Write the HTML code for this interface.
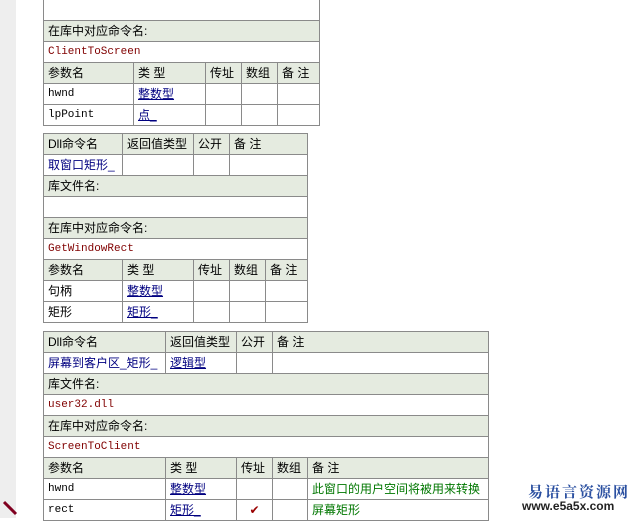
<!DOCTYPE html><html><head><meta charset="utf-8"><style>
body{margin:0;width:643px;height:518px;overflow:hidden;background:#fff;position:relative;font-family:"Liberation Sans","Noto Sans CJK SC","WenQuanYi Zen Hei",sans-serif;font-size:12px;color:#000}
.strip{position:absolute;left:0;top:0;width:16px;height:518px;background:#eeeeee}
table{position:absolute;border-collapse:collapse;table-layout:fixed}
td{border:1px solid #8a8a8a;height:20px;padding:0 0 0 4px;white-space:nowrap;overflow:hidden;line-height:20px}
.h td,td.h{background:#e5ebe0}
.b{color:#000080;text-decoration:underline}
.m{font-family:"Liberation Mono",monospace;font-size:11px;color:#800000}
.mb{font-family:"Liberation Mono",monospace;font-size:11px}
.g{color:#007700}
.logo{position:absolute;left:528px;top:481px;color:#2a4fa0;font-size:15px;font-weight:bold;letter-spacing:2px;font-family:"Noto Serif CJK SC",serif}
.url{position:absolute;left:522px;top:499px;font-size:12px;color:#222;font-weight:bold}
</style></head><body>
<div class="strip"></div>
<table style="left:43px;top:-1px;width:276px">
<col style="width:90px"><col style="width:72px"><col style="width:36px"><col style="width:36px"><col style="width:42px">
<tr><td colspan="5"></td></tr>
<tr class="h"><td colspan="5">在库中对应命令名:</td></tr>
<tr><td colspan="5" class="m">ClientToScreen</td></tr>
<tr class="h"><td>参数名</td><td>类 型</td><td>传址</td><td>数组</td><td>备 注</td></tr>
<tr><td class="mb">hwnd</td><td><span class="b">整数型</span></td><td></td><td></td><td></td></tr>
<tr><td class="mb">lpPoint</td><td><span class="b">点_</span></td><td></td><td></td><td></td></tr>
</table>
<table style="left:43px;top:133px;width:264px">
<col style="width:79px"><col style="width:71px"><col style="width:36px"><col style="width:36px"><col style="width:42px">
<tr class="h"><td>Dll命令名</td><td>返回值类型</td><td>公开</td><td colspan="2">备 注</td></tr>
<tr><td><span class="b" style="text-decoration:none">取窗口矩形_</span></td><td></td><td></td><td colspan="2"></td></tr>
<tr class="h"><td colspan="5">库文件名:</td></tr>
<tr><td colspan="5"></td></tr>
<tr class="h"><td colspan="5">在库中对应命令名:</td></tr>
<tr><td colspan="5" class="m">GetWindowRect</td></tr>
<tr class="h"><td>参数名</td><td>类 型</td><td>传址</td><td>数组</td><td>备 注</td></tr>
<tr><td>句柄</td><td><span class="b">整数型</span></td><td></td><td></td><td></td></tr>
<tr><td>矩形</td><td><span class="b">矩形_</span></td><td></td><td></td><td></td></tr>
</table>
<table style="left:43px;top:331px;width:445px">
<col style="width:122px"><col style="width:71px"><col style="width:36px"><col style="width:35px"><col style="width:181px">
<tr class="h"><td>Dll命令名</td><td>返回值类型</td><td>公开</td><td colspan="2">备 注</td></tr>
<tr><td><span class="b" style="text-decoration:none">屏幕到客户区_矩形_</span></td><td><span class="b">逻辑型</span></td><td></td><td colspan="2"></td></tr>
<tr class="h"><td colspan="5">库文件名:</td></tr>
<tr><td colspan="5" class="m">user32.dll</td></tr>
<tr class="h"><td colspan="5">在库中对应命令名:</td></tr>
<tr><td colspan="5" class="m">ScreenToClient</td></tr>
<tr class="h"><td>参数名</td><td>类 型</td><td>传址</td><td>数组</td><td>备 注</td></tr>
<tr><td class="mb">hwnd</td><td><span class="b">整数型</span></td><td></td><td></td><td class="g">此窗口的用户空间将被用来转换</td></tr>
<tr><td class="mb">rect</td><td><span class="b">矩形_</span></td><td style="color:#900;text-align:center;padding:0">✔</td><td></td><td class="g">屏幕矩形</td></tr>
</table>
<svg style="position:absolute;left:2px;top:500px" width="16" height="16"><line x1="2" y1="2" x2="14" y2="14" stroke="#800020" stroke-width="3"/></svg>
<div class="logo">易语言资源网</div>
<div class="url">www.e5a5x.com</div>
</body></html>
